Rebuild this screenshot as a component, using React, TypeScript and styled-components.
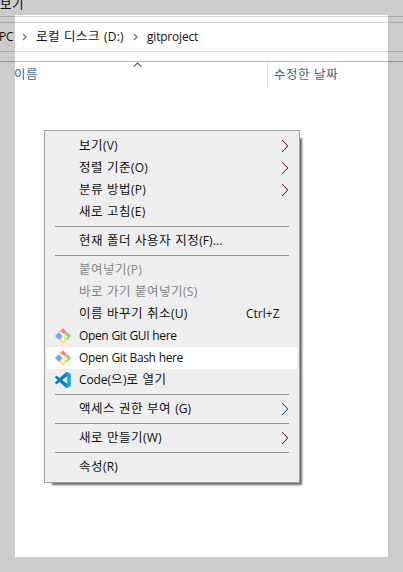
import React from "react";
import styled, { createGlobalStyle } from "styled-components";

const GlobalStyle = createGlobalStyle`
  * { box-sizing: border-box; }
  body {
    margin: 0;
    background: #fff;
    overflow: hidden;
    font-family: "Open Sans", "Noto Sans CJK KR", sans-serif;
    font-size: 12px;
    color: #111;
  }
`;

const Window = styled.div`
  position: relative;
  width: 403px;
  height: 572px;
  overflow: hidden;
  background: #fff;
`;

const Frame = styled.div`
  position: absolute;
  inset: 0;
  border: 15px solid rgba(0, 0, 0, 0.2);
  pointer-events: none;
`;

const Run = styled.span<{ $hangul?: boolean; $latinTrack: number }>`
  white-space: pre;
  font-size: ${(p) => (p.$hangul ? 12.5 : 12)}px;
  letter-spacing: ${(p) => (p.$hangul ? 0.5 : p.$latinTrack)}px;
  word-spacing: 0.3px;
`;

const RibbonBar = styled.div`
  height: 17px;
  line-height: 17px;
  border-bottom: 1px solid #d9d9d9;
  display: flex;
  align-items: flex-start;
`;

const RibbonTab = styled.div`
  margin-top: -4px;
`;

const AddressBar = styled.div`
  margin-top: 5px;
  height: 30px;
  border: solid #d9d9d9;
  border-width: 1px 0;
  display: flex;
  align-items: center;
  line-height: 28px;
`;

const Crumb = styled.div<{ $width: number; $shift?: number }>`
  width: ${(p) => p.$width}px;
  margin-left: ${(p) => p.$shift ?? 0}px;
  flex: none;
`;

const CrumbArrow = styled.svg`
  width: 5px;
  height: 8px;
  flex: none;
  margin-right: 9px;
`;

const ColumnHeader = styled.div`
  margin-top: 9px;
  border-top: 1px solid #b5b5b5;
  height: 26px;
  display: flex;
  line-height: 25px;
  color: #466084;
`;

const NameColumn = styled.div`
  width: 268px;
  padding-left: 14px;
  border-right: 1px solid #e2e2e2;
  display: flex;
`;

const NameLabel = styled.div`
  width: 119px;
`;

const DateColumn = styled.div`
  padding-left: 6px;
`;

const SortArrow = styled.svg`
  width: 9px;
  height: 6px;
`;

const Menu = styled.div`
  position: absolute;
  left: 44px;
  top: 130px;
  width: 256px;
  height: 353px;
  padding: 4px 2px;
  background: #eee;
  border: 1px solid #a0a0a0;
  box-shadow: 5px 5px 2px -3px rgba(0, 0, 0, 0.6);
`;

const Item = styled.div<{ $active?: boolean; $disabled?: boolean }>`
  height: 22px;
  line-height: 22px;
  padding: 0 8px;
  display: flex;
  align-items: center;
  background: ${(p) => (p.$active ? "#fff" : "transparent")};
  color: ${(p) => (p.$disabled ? "#858585" : "#111")};
`;

const IconSlot = styled.div`
  width: 24px;
  height: 16px;
  flex: none;
  display: flex;
`;

const Label = styled.div`
  flex: 1;
`;

const Shortcut = styled.div`
  width: 43px;
`;

const Chevron = styled.svg`
  width: 8px;
  height: 14px;
  flex: none;
`;

const Separator = styled.div`
  height: 1px;
  margin: 3px 8px;
  background: #919191;
`;

/* Splits a caption into Hangul and Latin runs so each script keeps its own spacing. */
const Caption = ({ text, track = 0.2 }: { text: string; track?: number }) => {
  const plain = !/[가-힣]/.test(text);
  const runs = plain ? [text] : text.match(/[가-힣 ]+|[^가-힣 ]+/g) ?? [];
  return (
    <>
      {runs.map((run, i) => (
        <Run key={i} $hangul={!plain && /[가-힣 ]/.test(run)} $latinTrack={track}>
          {run}
        </Run>
      ))}
    </>
  );
};

const GitIcon = () => (
  <svg width="16" height="16" viewBox="0 0 16 16">
    <path d="M8 .2 12 4 8.8 7 4.2 3.8Z" fill="#ff7f7f" />
    <path d="M3.8 4.2 7.2 7.4 7 9 4 12 0 8Z" fill="#7aa5f5" />
    <path d="M12.2 4 16 8 12 12 9 8.5Z" fill="#86d66a" />
    <path d="M8 8.5 11.8 12.2 8 16 4.2 12.2Z" fill="#ffe070" />
    <path d="M5 3.5 8.3 6.6V12.3M8.3 6.6 11.3 9" fill="none" stroke="#f4f1ef" strokeWidth="1.1" />
    <circle cx="8.2" cy="6.4" r="1.2" fill="#fff" />
    <circle cx="8.2" cy="11.8" r="1.2" fill="#fff" />
    <circle cx="11.3" cy="8.7" r="1.2" fill="#fff" />
  </svg>
);

const CodeIcon = () => (
  <svg width="16" height="16" viewBox="0 0 24 24">
    <path
      fill="#0b7ec4"
      d="M23.15 2.587L18.21.21a1.494 1.494 0 0 0-1.705.29l-9.46 8.63-4.12-3.128a.999.999 0 0 0-1.276.057L.327 7.261A1 1 0 0 0 .326 8.74L3.899 12 .326 15.26a1 1 0 0 0 .001 1.479L1.65 17.94a.999.999 0 0 0 1.276.057l4.12-3.128 9.46 8.63a1.492 1.492 0 0 0 1.704.29l4.942-2.377A1.5 1.5 0 0 0 24 20.06V3.939a1.5 1.5 0 0 0-.85-1.352zm-5.146 14.861L10.826 12l7.178-5.448v10.896z"
    />
    <path fill="#27a4ea" d="M18 .2 23.2 2.6 24 4V20L23.2 21.4 18 23.8Z" />
  </svg>
);

type Tone = "red" | "blue";

type Entry = {
  text?: string;
  track?: number;
  icon?: "git" | "code";
  sub?: Tone;
  shortcut?: string;
  disabled?: boolean;
  active?: boolean;
};

const entries: Entry[] = [
  { text: "보기(V)", sub: "red" },
  { text: "정렬 기준(O)", sub: "red" },
  { text: "분류 방법(P)", sub: "red" },
  { text: "새로 고침(E)" },
  {},
  { text: "현재 폴더 사용자 지정(F)...", track: 0.1 },
  {},
  { text: "붙여넣기(P)", disabled: true },
  { text: "바로 가기 붙여넣기(S)", disabled: true },
  { text: "이름 바꾸기 취소(U)", shortcut: "Ctrl+Z" },
  { text: "Open Git GUI here", icon: "git", track: -0.35 },
  { text: "Open Git Bash here", icon: "git", track: -0.35, active: true },
  { text: "Code(으)로 열기", icon: "code", track: -0.1 },
  {},
  { text: "액세스 권한 부여 (G)", sub: "blue", track: 0 },
  {},
  { text: "새로 만들기(W)", sub: "red" },
  {},
  { text: "속성(R)" },
];

const tones: Record<Tone, string> = { red: "#84141c", blue: "#124f8c" };

const SubmenuArrow = ({ tone }: { tone: Tone }) => (
  <Chevron viewBox="0 0 8 14" fill="none">
    <path d="M.6 1 6.4 7 .6 13" stroke="#e6c09a" strokeWidth="0.8" />
    <path d="M1.5 1 7.3 7 1.5 13" stroke="#8fc0ea" strokeWidth="0.8" />
    <path d="M1 1 6.8 7 1 13" stroke={tones[tone]} strokeWidth="1" />
  </Chevron>
);

const MenuRow = ({ entry }: { entry: Entry }) =>
  entry.text ? (
    <Item $active={entry.active} $disabled={entry.disabled}>
      <IconSlot>
        {entry.icon === "git" && <GitIcon />}
        {entry.icon === "code" && <CodeIcon />}
      </IconSlot>
      <Label>
        <Caption text={entry.text} track={entry.track} />
      </Label>
      {entry.shortcut && <Shortcut>{entry.shortcut}</Shortcut>}
      {entry.sub && <SubmenuArrow tone={entry.sub} />}
    </Item>
  ) : (
    <Separator />
  );

const PathArrow = () => (
  <CrumbArrow viewBox="0 0 5 8">
    <path d="M1 1 4 4 1 7" fill="none" stroke="#777" strokeWidth="1.4" />
  </CrumbArrow>
);

export default function App() {
  return (
    <Window>
      <GlobalStyle />
      <RibbonBar>
        <RibbonTab>
          <Caption text="보기" />
        </RibbonTab>
      </RibbonBar>
      <AddressBar>
        <Crumb $width={23} $shift={-1}>
          <Caption text="PC" track={-0.3} />
        </Crumb>
        <PathArrow />
        <Crumb $width={97}>
          <Caption text="로컬 디스크 (D:)" />
        </Crumb>
        <PathArrow />
        <Crumb $width={80}>
          <Caption text="gitproject" track={-0.2} />
        </Crumb>
      </AddressBar>
      <ColumnHeader>
        <NameColumn>
          <NameLabel>
            <Caption text="이름" />
          </NameLabel>
          <SortArrow viewBox="0 0 9 6">
            <path d="M.7 4.7 4.5 1 8.3 4.7" fill="none" stroke="#555" strokeWidth="1.1" />
          </SortArrow>
        </NameColumn>
        <DateColumn>
          <Caption text="수정한 날짜" />
        </DateColumn>
      </ColumnHeader>
      <Menu>
        {entries.map((entry, i) => (
          <MenuRow key={i} entry={entry} />
        ))}
      </Menu>
      <Frame />
    </Window>
  );
}
